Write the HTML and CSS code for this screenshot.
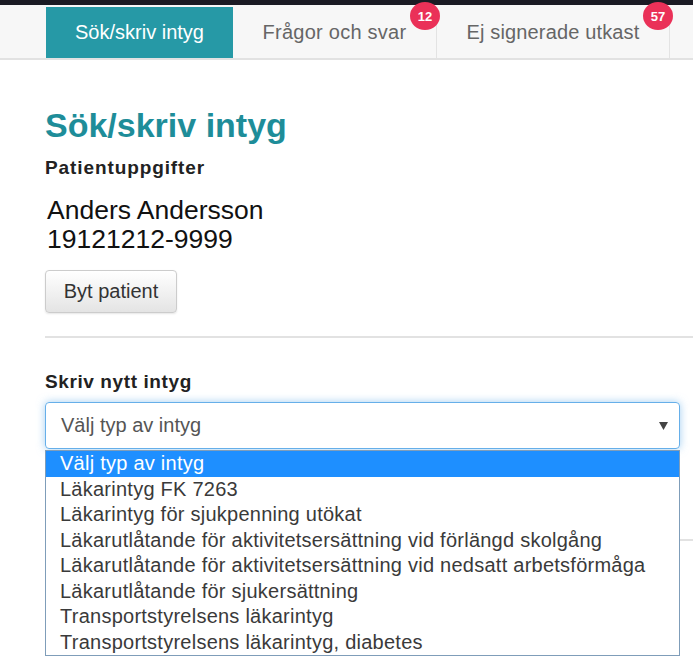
FILE: index.html
```html
<!DOCTYPE html>
<html lang="sv">
<head>
    <meta charset="UTF-8">
    <meta name="viewport" content="width=device-width, initial-scale=1.0">
    <title>Sök/skriv intyg</title>
    <link rel="stylesheet" href="styles.css">
</head>
<body>
    <div class="topbar"></div>
    <div class="tabbar">
        <div class="tab tab-search active">Sök/skriv intyg</div>
        <div class="tab tab-questions">Frågor och svar<span class="badge">12</span></div>
        <div class="tab tab-drafts">Ej signerade utkast<span class="badge">57</span></div>
    </div>
    <div class="content">
        <h1>Sök/skriv intyg</h1>
        <h4>Patientuppgifter</h4>
        <div class="patient">
            <div>Anders Andersson</div>
            <div>19121212-9999</div>
        </div>
        <button class="btn">Byt patient</button>
        <hr class="separator">
        <h4 class="new-label">Skriv nytt intyg</h4>
        <div class="select-wrap">
            <div class="select">
                <span>Välj typ av intyg</span>
                <svg class="caret" width="9" height="8" viewBox="0 0 9 8"><polygon points="0,0 9,0 4.5,8" fill="#444"/></svg>
            </div>
            <!-- open dropdown list -->
            <ul class="options">
                <li class="selected">Välj typ av intyg</li>
                <li>Läkarintyg FK 7263</li>
                <li>Läkarintyg för sjukpenning utökat</li>
                <li>Läkarutlåtande för aktivitetsersättning vid förlängd skolgång</li>
                <li>Läkarutlåtande för aktivitetsersättning vid nedsatt arbetsförmåga</li>
                <li>Läkarutlåtande för sjukersättning</li>
                <li>Transportstyrelsens läkarintyg</li>
                <li>Transportstyrelsens läkarintyg, diabetes</li>
            </ul>
        </div>
        <hr class="separator lower">
    </div>
</body>
</html>
```

FILE: styles.css
```css
* {
    margin: 0;
    padding: 0;
    box-sizing: border-box;
}
html, body {
    min-height: 668px;
}
body {
    font-family: "Liberation Sans", Arial, sans-serif;
    background: #fff;
    color: #222;
    width: 693px;
}
.topbar {
    height: 5px;
    background: #1b1b24;
}
.tabbar {
    display: flex;
    height: 55px;
    padding: 2px 0 0 46px;
    background: #f7f7f7;
    border-bottom: 2px solid #e2e2e2;
}
.tab {
    position: relative;
    display: flex;
    align-items: center;
    justify-content: center;
    font-size: 20px;
    color: #666;
    border-right: 1px solid #e3e3e3;
}
.tab-search {
    width: 187px;
}
.tab-questions {
    width: 204px;
    letter-spacing: 0.25px;
}
.tab-drafts {
    width: 233px;
    letter-spacing: 0.15px;
}
.tab.active {
    background: #2699a6;
    color: #fff;
    border-right: none;
}
.badge {
    position: absolute;
    top: -5px;
    right: -4px;
    width: 30px;
    height: 28px;
    border-radius: 50%;
    background: #ea3158;
    color: #fff;
    font-size: 13px;
    font-weight: bold;
    letter-spacing: 0;
    display: flex;
    align-items: center;
    justify-content: center;
}
.content {
    padding: 0 0 0 45px;
}
h1 {
    margin-top: 45px;
    font-size: 34px;
    line-height: 40px;
    color: #1e8d99;
}
h4 {
    font-size: 19px;
    line-height: 24px;
    letter-spacing: 0.9px;
    color: #222;
}
h1 + h4 {
    margin-top: 11px;
}
.patient {
    margin-top: 16px;
    padding-left: 2px;
    font-size: 26.5px;
    line-height: 29px;
    color: #111;
}
.btn {
    margin-top: 16px;
    width: 132px;
    height: 43px;
    font-family: inherit;
    font-size: 20px;
    color: #333;
    background: linear-gradient(#fff, #e4e4e4);
    border: 1px solid #ccc;
    border-radius: 4px;
    box-shadow: 0 1px 2px rgba(0, 0, 0, 0.1);
}
.separator {
    margin-top: 23px;
    border: none;
    border-top: 2px solid #e2e2e2;
}
.new-label {
    margin-top: 32px;
    letter-spacing: 0.6px;
}
.select-wrap {
    position: relative;
    margin-top: 8px;
    width: 635px;
}
.select {
    height: 47px;
    display: flex;
    align-items: center;
    justify-content: space-between;
    padding: 0 11px 0 15px;
    font-size: 20px;
    color: #555;
    border: 1px solid #66afe9;
    border-radius: 4px;
    box-shadow: 0 0 8px rgba(102, 175, 233, 0.6);
}
.options {
    position: absolute;
    top: 48px;
    left: 0;
    width: 635px;
    list-style: none;
    background: #fff;
    border: 1px solid #7f9db9;
    z-index: 10;
}
.options li {
    padding-left: 14px;
    height: 25.5px;
    line-height: 25.5px;
    font-size: 20px;
    letter-spacing: 0.25px;
    color: #3a3a3a;
}
.options li.selected {
    background: #1e8fff;
    color: #fff;
}
.separator.lower {
    margin-top: 90px;
}
```
